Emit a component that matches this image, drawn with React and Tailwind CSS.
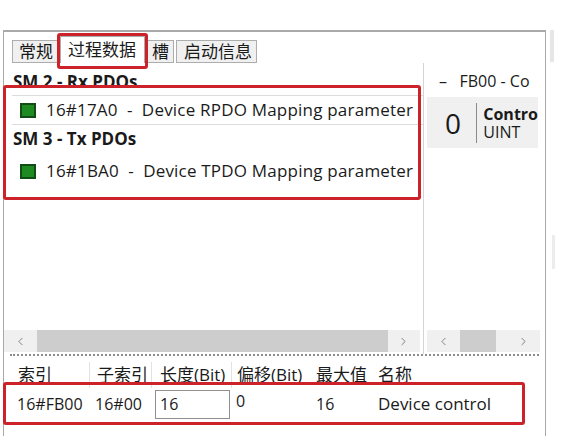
import React from 'react';
import { ChevronLeft, ChevronRight } from 'lucide-react';

const font = "font-['Open_Sans','Noto_Sans_CJK_SC',sans-serif]";

function Tab({ children, active, className = '' }) {
  return (
    <div
      className={
        'border border-[#adadad] text-[17px] text-[#1a1a1a] ' +
        (active
          ? 'h-[27px] bg-white border-b-0 leading-[26px] '
          : 'h-[23px] bg-[#f0f0f0] leading-[21px] ') +
        className
      }
    >
      {children}
    </div>
  );
}

function GreenBox() {
  return <div className="w-[16px] h-[15px] bg-[#1d8a22] border-2 border-[#124d15] shrink-0" />;
}

function ScrollBar({ thumbLeft, thumbWidth, className = '' }) {
  return (
    <div className={'h-[22px] bg-[#f0f0f0] flex items-center ' + className}>
      <div className="w-[33px] h-full flex items-center justify-center text-[#707070]">
        <ChevronLeft size={13} strokeWidth={1.6} />
      </div>
      <div className="flex-1 h-full relative">
        <div className="h-full bg-[#cdcdcd]" style={{ marginLeft: thumbLeft, width: thumbWidth }} />
      </div>
      <div className="w-[33px] h-full flex items-center justify-center text-[#707070]">
        <ChevronRight size={13} strokeWidth={1.6} />
      </div>
    </div>
  );
}

export default function App() {
  return (
    <div className={'w-[564px] h-[436px] bg-white overflow-hidden relative flex pt-[30px] ' + font}>
      {/* window frame */}
      <div className="ml-[3px] w-[543px] h-[406px] flex flex-col border-t-2 border-l border-r border-[#a9a9a9]">
        {/* tabs */}
        <div className="h-[31px] shrink-0 flex items-end gap-[2px] pl-[8px]">
          <Tab className="w-[46px] pl-[6px]">常规</Tab>
          <Tab active className="w-[85px] pl-[7px]">过程数据</Tab>
          <Tab className="w-[27px] pl-[4px]">槽</Tab>
          <Tab className="w-[81px] pl-[7px]">启动信息</Tab>
        </div>

        {/* main panes */}
        <div className="h-[291px] shrink-0 flex">
          {/* left pane */}
          <div className="w-[419px] flex flex-col">
            <div className="mt-[9px] h-[20px] leading-[20px] pl-[9px] text-[17px] font-bold text-[#1a1a1a]">
              SM 2 - Rx PDOs
            </div>
            <div className="mt-[3px] ml-[8px] h-[30px] border-y border-[#dcdcdc] flex items-center pl-[8px] gap-[10px] text-[17px] text-[#1a1a1a]">
              <GreenBox />
              <span className="whitespace-pre tracking-[0.2px]">16#17A0  -  Device RPDO Mapping parameter</span>
            </div>
            <div className="mt-[4px] h-[20px] leading-[20px] pl-[9px] text-[17px] font-bold text-[#1a1a1a]">
              SM 3 - Tx PDOs
            </div>
            <div className="mt-[8px] ml-[8px] h-[28px] flex items-center pl-[8px] gap-[10px] text-[17px] text-[#1a1a1a]">
              <GreenBox />
              <span className="whitespace-pre tracking-[0.2px]">16#1BA0  -  Device TPDO Mapping parameter</span>
            </div>
            <div className="flex-1" />
            <ScrollBar thumbLeft={0} thumbWidth={351} className="w-[416px] mb-[2px]" />
          </div>

          <div className="w-px bg-[#d4d4d4]" />

          {/* right pane */}
          <div className="flex-1 flex flex-col overflow-hidden">
            <div className="mt-[8px] h-[20px] leading-[20px] pl-[15px] text-[16px] text-[#1a1a1a] whitespace-pre overflow-hidden w-[116px]">
              –   FB00 - Co
            </div>
            <div className="mt-[6px] ml-[3px] w-[111px] h-[51px] bg-[#f0f0f0] flex items-center overflow-hidden">
              <div className="w-[50px] pl-[18px] text-[28px] leading-none text-[#1a1a1a]">0</div>
              <div className="w-px h-[40px] bg-[#8a8a8a]" />
              <div className="pl-[6px] flex flex-col text-[16px] leading-[18px] text-[#1a1a1a] whitespace-nowrap">
                <span className="font-bold">Contro</span>
                <span>UINT</span>
              </div>
            </div>
            <div className="flex-1" />
            <ScrollBar thumbLeft={0} thumbWidth={36} className="ml-[3px] w-[113px] mb-[2px]" />
          </div>
        </div>

        {/* splitter */}
        <div className="h-[3px] mx-[6px] border-t-2 border-dotted border-[#8c8c8c]" />

        {/* table header */}
        <div className="mt-[5px] h-[26px] flex items-center text-[17px] text-[#1a1a1a]">
          <div className="w-[86px] pl-[14px] border-r border-[#e2e2e2]">索引</div>
          <div className="w-[62px] pl-[7px] border-r border-[#e2e2e2]">子索引</div>
          <div className="w-[80px] pl-[8px] border-r border-[#e2e2e2]">长度(Bit)</div>
          <div className="w-[78px] pl-[5px]">偏移(Bit)</div>
          <div className="w-[62px] pl-[6px]">最大值</div>
          <div className="flex-1 pl-[6px]">名称</div>
        </div>

        {/* data row */}
        <div className="h-[32px] flex items-center text-[16px] text-[#1a1a1a]">
          <div className="w-[86px] pl-[13px]">16#FB00</div>
          <div className="w-[62px] pl-[5px]">16#00</div>
          <div className="w-[80px] pl-[3px]">
            <div className="w-[75px] h-[29px] border border-[#8f8f8f] leading-[27px] pl-[4px]">16</div>
          </div>
          <div className="w-[78px] pl-[4px] self-start pt-[1px]">0</div>
          <div className="w-[62px] pl-[6px]">16</div>
          <div className="flex-1 pl-[6px] text-[17px]">Device control</div>
        </div>
      </div>

      {/* outer right strip */}
      <div className="flex-1 flex flex-col">
        <div className="ml-[4px] w-[4px] h-[32px] bg-[#e6e6e6]" />
        <div className="h-[173px]" />
        <div className="ml-[6px] w-[3px] h-[34px] bg-[#ececec]" />
      </div>

      {/* red highlight annotations */}
      <div className="absolute left-[57px] top-[33px] w-[91px] h-[36px] border-[3px] border-[#cc2229] rounded-[3px]" />
      <div className="absolute left-[3px] top-[85px] w-[418px] h-[115px] border-[3px] border-[#cc2229] rounded-[3px]" />
      <div className="absolute left-[3px] top-[382px] w-[522px] h-[43px] border-[3px] border-[#cc2229] rounded-[3px]" />
    </div>
  );
}
